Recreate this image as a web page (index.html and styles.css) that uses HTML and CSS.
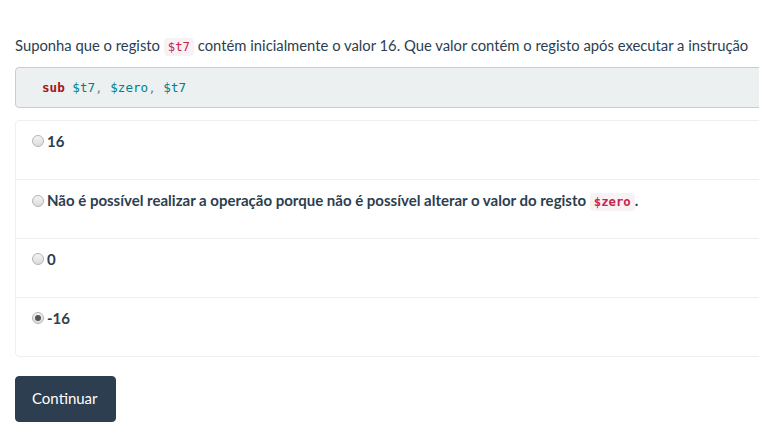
FILE: index.html
```html
<!DOCTYPE html>
<html lang="pt">
<head>
<meta charset="utf-8">
<title>Pergunta</title>
<link rel="stylesheet" href="styles.css">
</head>
<body>
<div class="container">
  <p class="question">Suponha que o registo <code class="inline">$t7</code> contém inicialmente o valor 16. Que valor contém o registo após executar a instrução</p>
  <pre class="block"><span class="kw">sub</span> <span class="reg">$t7</span>, <span class="reg">$zero</span>, <span class="reg">$t7</span></pre>
  <ul class="options">
    <li class="option"><label><input type="radio" name="a" class="radio"><span>16</span></label></li>
    <li class="option"><label><input type="radio" name="a" class="radio"><span>Não é possível realizar a operação porque não é possível alterar o valor do registo <code class="inline">$zero</code>.</span></label></li>
    <li class="option"><label><input type="radio" name="a" class="radio"><span>0</span></label></li>
    <li class="option"><label><input type="radio" name="a" class="radio" checked><span>-16</span></label></li>
  </ul>
  <button class="btn">Continuar</button>
</div>
</body>
</html>
```
FILE: styles.css
```css
html, body {
  margin: 0;
  padding: 0;
  overflow: hidden;
  background: #fff;
}
body {
  font-family: Lato, "Open Sans", sans-serif;
  font-size: 14.8px;
  line-height: 1.42857;
  color: #2c3e50;
}
.container {
  width: 800px;
  padding: 35px 0 0 15px;
}
.question {
  margin: 0 0 9px;
  white-space: nowrap;
  line-height: 21px;
}
code.inline {
  font-family: "DejaVu Sans Mono", "Liberation Mono", monospace;
  font-size: 12.3px;
  color: #c7254e;
  background: #f9f2f4;
  border-radius: 4px;
  padding: 2px 4px;
}
.block {
  margin: 0 0 12px;
  padding: 11px 15px 10px 26px;
  font-family: "DejaVu Sans Mono", "Liberation Mono", monospace;
  font-size: 12.6px;
  line-height: 18px;
  color: #7b8a8b;
  background: #ecf0f1;
  border: 1px solid #cccccc;
  border-radius: 4px;
}
.kw {
  color: #a61717;
  font-weight: bold;
}
.reg {
  color: #00808a;
}
.options {
  list-style: none;
  margin: 0 0 19px;
  padding: 0;
  border: 1px solid #ecf0f1;
  border-radius: 4px;
}
.option {
  padding: 10px 15px 27px;
  border-top: 1px solid #ecf0f1;
  height: 21px;
}
.option:first-child {
  border-top: none;
}
.option label {
  display: flex;
  align-items: center;
  font-weight: bold;
  font-size: 15px;
  line-height: 21px;
}
.radio {
  appearance: none;
  -webkit-appearance: none;
  width: 12px;
  height: 12px;
  margin: 0 3px 2px 1px;
  border-radius: 50%;
  border: 1px solid #b5b5b5;
  background: linear-gradient(#f4f4f4, #dcdcdc);
  box-sizing: border-box;
  position: relative;
}
.radio:checked::after {
  content: "";
  position: absolute;
  left: 2px;
  top: 2px;
  width: 6px;
  height: 6px;
  border-radius: 50%;
  background: #555;
}
.btn {
  font-family: Lato, "Open Sans", sans-serif;
  font-size: 15px;
  line-height: 21px;
  color: #fff;
  background: #2c3e50;
  border: 1px solid #2c3e50;
  border-radius: 4px;
  padding: 11px 17px 12px 16px;
  cursor: pointer;
}
```
